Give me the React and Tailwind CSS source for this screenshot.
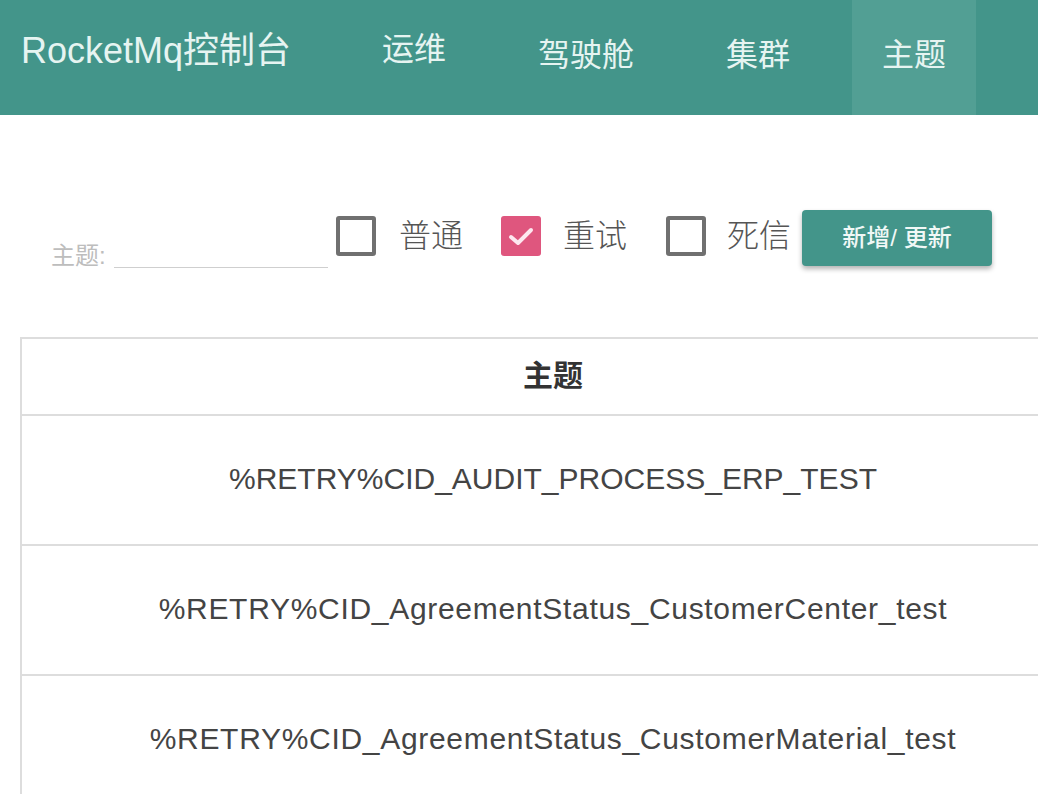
import React from "react";

const FONT = { fontFamily: '"Liberation Sans", "Noto Sans CJK SC", sans-serif' };

function Box({ checked }) {
  if (checked) {
    return (
      <div className="w-[40px] h-[40px] rounded-[3px] bg-[#df567e] flex items-center justify-center shrink-0">
        <svg width="28" height="28" viewBox="0 0 28 28">
          <polyline points="4,15 11,21 24,8" fill="none" stroke="#fde7ef" strokeWidth="4" strokeLinecap="round" strokeLinejoin="round" />
        </svg>
      </div>
    );
  }
  return <div className="w-[40px] h-[40px] rounded-[3px] border-[4px] border-[#707070] shrink-0" />;
}

const rows = [
  { text: "%RETRY%CID_AUDIT_PROCESS_ERP_TEST", cls: "tracking-normal" },
  { text: "%RETRY%CID_AgreementStatus_CustomerCenter_test", cls: "tracking-[0.7px]" },
  { text: "%RETRY%CID_AgreementStatus_CustomerMaterial_test", cls: "tracking-[0.7px]" },
];

export default function App() {
  return (
    <div className="w-[1038px] h-[794px] overflow-hidden bg-white" style={FONT}>
      <nav className="h-[115px] bg-[#43958a] flex items-stretch text-[#e6f4f1]">
        <div className="w-[352px] pl-[21px] flex items-center pb-[14px] text-[36px] leading-none whitespace-nowrap">
          RocketMq控制台
        </div>
        <ul className="flex items-stretch gap-[32px]">
          <li className="px-[30px] flex items-center pb-[17px] text-[32px] leading-none">运维</li>
          <li className="px-[30px] flex items-center pb-[6px] text-[32px] leading-none">驾驶舱</li>
          <li className="px-[30px] flex items-center pb-[6px] text-[32px] leading-none">集群</li>
          <li className="px-[30px] flex items-center pb-[6px] text-[32px] leading-none bg-[#529f94]">主题</li>
        </ul>
      </nav>

      <div className="flex items-start pt-[95px] pl-[51px]">
        <div className="flex items-end mt-[28px]">
          <span className="w-[63px] text-[24px] leading-none text-[#bdbdbd] whitespace-nowrap">主题:</span>
          <div className="w-[214px] h-[30px] border-b-[1.5px] border-[#cfcfcf]" />
        </div>
        <div className="flex items-center ml-[8px] mt-[6px]">
          <div className="w-[165px] flex items-center">
            <Box />
            <span className="ml-[23px] text-[32px] leading-none text-[#555] font-light">普通</span>
          </div>
          <div className="w-[165px] flex items-center">
            <Box checked />
            <span className="ml-[22px] text-[32px] leading-none text-[#555] font-light">重试</span>
          </div>
          <div className="flex items-center">
            <Box />
            <span className="ml-[21px] text-[32px] leading-none text-[#555] font-light">死信</span>
          </div>
        </div>
        <button className="ml-[11px] w-[190px] h-[56px] rounded-[4px] bg-[#43958a] text-[#f0f8f6] text-[24px] font-medium shadow-[0_3px_5px_rgba(0,0,0,0.3)] flex items-center justify-center">
          新增/ 更新
        </button>
      </div>

      <div className="mt-[69px] ml-[20px] w-[1064px] border-l-2 border-t-2 border-[#dddddd]">
        <div className="h-[77px] border-b-2 border-[#dddddd] flex items-center justify-center pb-[2px] text-[30px] font-bold text-[#333]">
          主题
        </div>
        {rows.map((r) => (
          <div key={r.text} className={"h-[130px] border-b-2 border-[#dddddd] flex items-center justify-center pb-[4px] text-[30px] text-[#444] " + r.cls}>
            {r.text}
          </div>
        ))}
      </div>
    </div>
  );
}
